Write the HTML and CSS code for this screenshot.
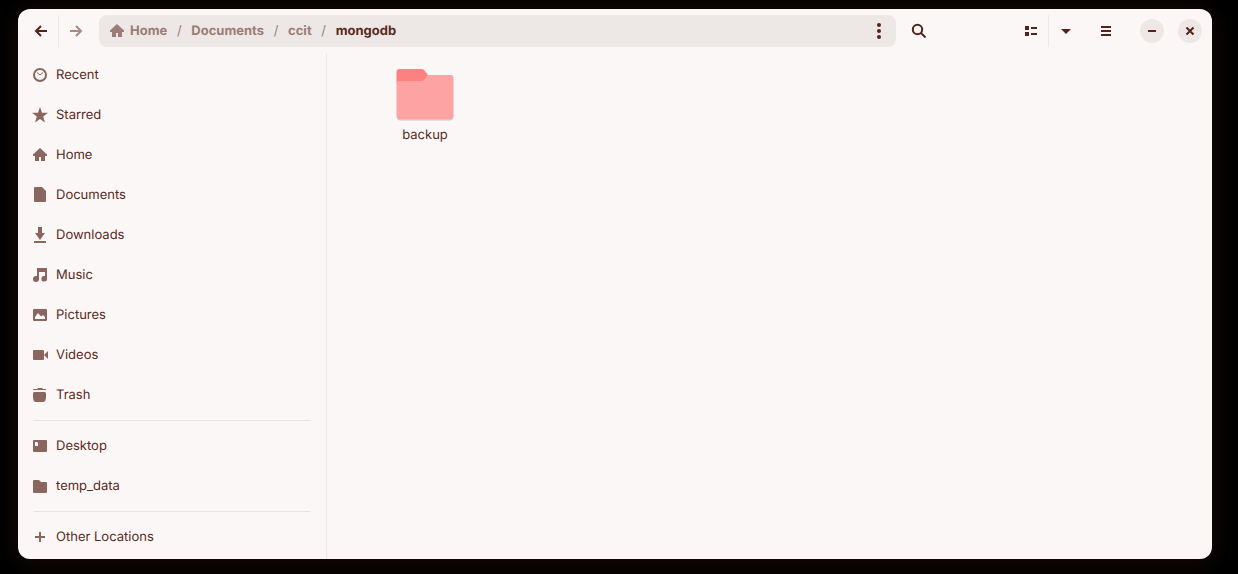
FILE: index.html
```html
<!DOCTYPE html>
<html lang="en">
<head>
<meta charset="utf-8">
<title>mongodb</title>
<link rel="stylesheet" href="styles.css">
</head>
<body>
<div class="window">
  <header class="header">
    <div class="linked">
      <button class="tool" aria-label="Back"><svg class="icon" viewBox="0 0 16 16"><path class="stroke" d="M8 3 3 8l5 5M3 8h11"/></svg></button>
      <button class="tool split" aria-label="Forward" disabled><svg class="icon" viewBox="0 0 16 16"><path class="stroke" d="m8 3 5 5-5 5M13 8H2"/></svg></button>
    </div>
    <nav class="pathbar" aria-label="Path">
      <a class="crumb" href="#home"><svg class="icon" viewBox="0 0 16 16"><path d="M8 1 1 7.500V9h2v5h4v-4h2v4h4V9h2V7.500z"/></svg>Home</a>
      <span class="slash">/</span>
      <a class="crumb" href="#documents">Documents</a>
      <span class="slash">/</span>
      <a class="crumb" href="#ccit">ccit</a>
      <span class="slash">/</span>
      <a class="crumb current" href="#mongodb" aria-current="page">mongodb</a>
      <button class="tool more" aria-label="Folder menu"><svg class="icon" viewBox="0 0 16 16"><circle cx="8" cy="2" r="2"/><circle cx="8" cy="8" r="2"/><circle cx="8" cy="14" r="2"/></svg></button>
    </nav>
    <button class="tool" aria-label="Search"><svg class="icon" viewBox="0 0 16 16"><circle class="stroke" cx="6.500" cy="6.500" r="4.700"/><path class="stroke" d="m10 10 4.500 4.500"/></svg></button>
    <div class="linked views">
      <button class="tool" aria-label="List view"><svg class="icon" viewBox="0 0 16 16"><path d="M2 3h4v4H2zM2 9h4v4H2zM8 4h6v2H8zM8 10h6v2H8z"/></svg></button>
      <button class="tool split" aria-label="View options"><svg class="icon" viewBox="0 0 16 16"><path d="M3 6h10l-5 5z"/></svg></button>
    </div>
    <button class="tool" aria-label="Main menu"><svg class="icon" viewBox="0 0 16 16"><path d="M3 3h10v2H3zM3 7h10v2H3zM3 11h10v2H3z"/></svg></button>
    <div class="controls">
      <button class="round" aria-label="Minimize"><svg class="icon" viewBox="0 0 16 16"><path d="M4 7h8v2H4z"/></svg></button>
      <button class="round" aria-label="Close"><svg class="icon" viewBox="0 0 16 16"><path class="stroke" d="m4.500 4.500 7 7m0-7-7 7"/></svg></button>
    </div>
  </header>
  <div class="body">
    <nav class="sidebar" aria-label="Places">
      <a class="place" href="#recent"><svg class="icon" viewBox="0 0 16 16"><circle class="stroke" cx="8" cy="8" r="6"/><path class="thin" d="m5 5.500 3 2.500 3-2.500"/></svg>Recent</a>
      <a class="place" href="#starred"><svg class="icon" viewBox="0 0 16 16"><path d="m8 0 2 5.800h6l-4.800 3.700L13 15.500l-5-3.600-5 3.600 1.800-6L0 5.800h6z"/></svg>Starred</a>
      <a class="place" href="#home"><svg class="icon" viewBox="0 0 16 16"><path d="M8 1 1 7.500V9h2v5h4v-4h2v4h4V9h2V7.500z"/></svg>Home</a>
      <a class="place" href="#documents"><svg class="icon" viewBox="0 0 16 16"><path d="M3 0h7l4 4v10a1 1 0 0 1-1 1H3a1 1 0 0 1-1-1V1a1 1 0 0 1 1-1z"/></svg>Documents</a>
      <a class="place" href="#downloads"><svg class="icon" viewBox="0 0 16 16"><path d="M6 0h4v6h3l-5 7-5-7h3zM2 14h12v2H2z"/></svg>Downloads</a>
      <a class="place" href="#music"><svg class="icon" viewBox="0 0 16 16"><path d="M5 1h10v10.500A2.800 2.800 0 1 1 12.500 9H13V5H7v7.300A3 3 0 1 1 4 9h1z"/></svg>Music</a>
      <a class="place" href="#pictures"><svg class="icon" viewBox="0 0 16 16"><path fill-rule="evenodd" d="M2 2h12a1 1 0 0 1 1 1v10a1 1 0 0 1-1 1H2a1 1 0 0 1-1-1V3a1 1 0 0 1 1-1zm1 10h10v-2l-2-2-2 1.500L6 6l-3 4z"/></svg>Pictures</a>
      <a class="place" href="#videos"><svg class="icon" viewBox="0 0 16 16"><path d="M2 3h9a1 1 0 0 1 1 1v8a1 1 0 0 1-1 1H2a1 1 0 0 1-1-1V4a1 1 0 0 1 1-1zM12 8l4-4v8z"/></svg>Videos</a>
      <a class="place" href="#trash"><svg class="icon" viewBox="0 0 16 16"><path d="M1 3V2h4l1-1h4l1 1h3v1H1zM2 5h11l1 1v4q0 5-3 5H4q-3 0-3-5V6z"/></svg>Trash</a>
      <hr class="rule">
      <a class="place" href="#desktop"><svg class="icon" viewBox="0 0 16 16"><path fill-rule="evenodd" d="M2 2h12a1 1 0 0 1 1 1v10a1 1 0 0 1-1 1H2a1 1 0 0 1-1-1V3a1 1 0 0 1 1-1zm1 2v4h3V5L5 4z"/></svg>Desktop</a>
      <a class="place" href="#temp_data"><svg class="icon" viewBox="0 0 16 16"><path d="M2 2h5l2 2h5a1 1 0 0 1 1 1v9a1 1 0 0 1-1 1H2a1 1 0 0 1-1-1V3a1 1 0 0 1 1-1z"/></svg>temp_data</a>
      <hr class="rule">
      <a class="place" href="#other"><svg class="icon" viewBox="0 0 16 16"><path d="M7 3h2v4h4v2H9v4H7V9H3V7h4z"/></svg>Other Locations</a>
    </nav>
    <main class="files">
      <a class="file" href="#backup">
        <svg class="folder" viewBox="0 0 64 61"><path fill="#d9c6c5" d="M4 50h56v4.500q0 3-3 3H7q-3 0-3-3z"/><path fill="#ff8080" d="M6.500 6H28q2 0 3 1l4 5-5 8H3.500V9q0-3 3-3z"/><path fill="#fda3a3" d="M6.500 18H28q2 0 3-1l3-4q1-1 3-1h20.500q3 0 3 3v38q0 3-3 3h-51q-3 0-3-3V20q0-2 3-2z"/></svg>
        <span>backup</span>
      </a>
    </main>
  </div>
</div>
</body>
</html>
```

FILE: styles.css
```css
* {
  box-sizing: border-box;
}

body {
  display: flex;
  min-height: 100vh;
  margin: 0;
  padding: 9px 26px 15px 18px;
  background: #000;
  color: #5a2a22;
  font: 13px/19px Inter, sans-serif;
  text-rendering: geometricPrecision;
}

a {
  color: inherit;
  text-decoration: none;
}

button {
  padding: 0;
  border: 0;
  background: none;
  color: #54241c;
}

.window {
  display: flex;
  flex: 1;
  flex-direction: column;
  border-radius: 12px;
  background: #fbf7f6;
  box-shadow: 0 2px 24px #1c0d08;
}

.header {
  display: flex;
  align-items: center;
  gap: 6px;
  height: 44px;
  padding: 0 10px 0 6px;
}

.linked,
.controls {
  display: flex;
}

.tool {
  display: grid;
  place-items: center;
  width: 34px;
  height: 32px;
}

.tool:disabled {
  color: #a98a85;
}

.split {
  width: 35px;
  border-left: 1px solid #eee9e8;
}

.icon {
  flex: none;
  width: 16px;
  height: 16px;
  fill: currentColor;
}

.stroke,
.thin {
  fill: none;
  stroke: currentColor;
  stroke-width: 2;
}

.thin {
  stroke-width: 1;
}

.pathbar {
  display: flex;
  flex: 1;
  align-items: center;
  height: 32px;
  padding-left: 10px;
  border-radius: 8px;
  background: #ede8e5;
  color: #9c7c75;
  font-weight: 700;
}

.crumb {
  display: flex;
  align-items: center;
  gap: 5px;
}

.slash {
  width: 24px;
  font-weight: 400;
  text-align: center;
}

.current {
  color: #5a2a22;
}

.more {
  margin-left: auto;
}

.views {
  margin-left: 72px;
}

.controls {
  gap: 14px;
  margin-left: 11px;
}

.round {
  display: grid;
  place-items: center;
  width: 24px;
  height: 24px;
  border-radius: 50%;
  background: #ede8e5;
}

.body {
  display: flex;
  flex: 1;
}

.sidebar {
  width: 309px;
  padding: 2px 16px 2px 14px;
  border-right: 1px solid #eee9e8;
}

.place {
  display: flex;
  align-items: center;
  gap: 8px;
  height: 40px;
}

.place .icon {
  color: #8a665e;
}

.rule {
  margin: 5px 0 5px 2px;
  border: 0;
  border-top: 1px solid #ebe6e5;
}

.files {
  flex: 1;
  padding: 10px 50px;
}

.file {
  display: flex;
  flex-direction: column;
  align-items: center;
  gap: 2px;
  width: 96px;
}

.folder {
  width: 64px;
  height: 61px;
}
```
